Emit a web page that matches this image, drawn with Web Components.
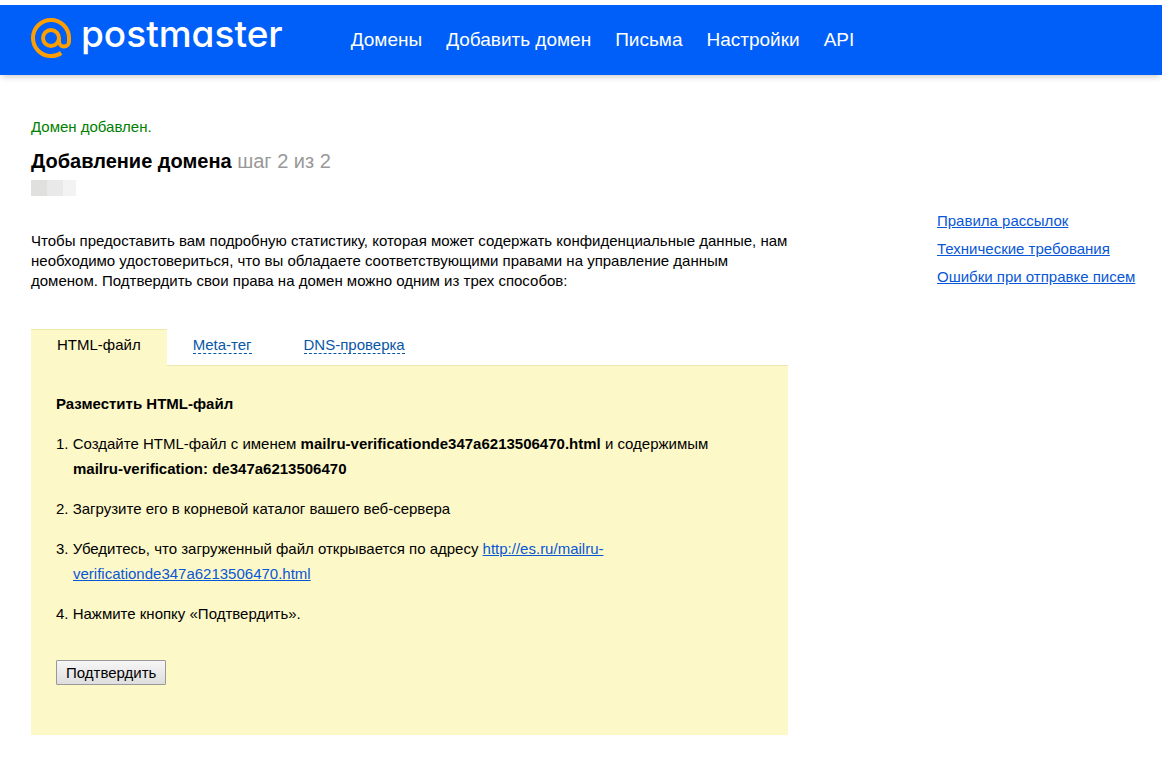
<!DOCTYPE html>
<html lang="ru">
<head>
<meta charset="utf-8">
<meta name="viewport" content="width=device-width, initial-scale=1">
<title>Postmaster — Добавление домена</title>
<style>
  body { margin: 0; background: #fff; color: #000; font: 15px/20px "Liberation Sans", Arial, sans-serif; }
</style>
</head>
<body>
<pm-page>
  <pm-header slot="header"></pm-header>
  <pm-intro>
    <span slot="status">Домен добавлен.</span>
    <span slot="title">Добавление домена</span>
    <span slot="step">шаг 2 из 2</span>
    Чтобы предоставить вам подробную статистику, которая может содержать конфиденциальные данные, нам необходимо удостовериться, что вы обладаете соответствующими правами на управление данным доменом. Подтвердить свои права на домен можно одним из трех способов:
  </pm-intro>
  <pm-verify></pm-verify>
  <pm-help slot="aside"></pm-help>
</pm-page>

<template id="pm-page">
  <style>
    :host { display: block; padding-top: 5px; }
    .body { display: grid; grid-template-columns: minmax(0, 1fr) 225px; column-gap: 149px; padding: 42px 0 29px 31px; }
  </style>
  <slot name="header"></slot>
  <div class="body">
    <main><slot></slot></main>
    <aside><slot name="aside"></slot></aside>
  </div>
</template>

<template id="pm-logo">
  <style>
    :host { display: block; }
    a { display: flex; align-items: center; gap: 10px; color: #fff; text-decoration: none; }
    svg { display: block; width: 40px; height: 40px; }
    span { font: 500 37px/32px Inter, sans-serif; font-feature-settings: "cv11"; padding-bottom: 8px; }
  </style>
  <a href="#" aria-label="postmaster">
    <svg viewBox="0 0 40 40" fill="none" stroke="#ff9e00" stroke-width="4" aria-hidden="true">
      <circle cx="20" cy="20" r="8"/>
      <path d="M28 20v3.500a5 5 0 0 0 10 0V20A18 18 0 1 0 20 38c3.800 0 7.300-1 10.200-3"/>
    </svg>
    <span>postmaster</span>
  </a>
</template>

<template id="pm-header">
  <style>
    :host { display: flex; align-items: center; gap: 68px; box-sizing: border-box; min-height: 70px; padding: 0 31px; background: #005ff9; box-shadow: 0 4px 6px -2px rgba(0, 0, 0, .2); }
    pm-logo { padding-bottom: 4px; }
    nav { display: flex; flex-wrap: wrap; gap: 24px; }
    nav a { color: #fff; font-size: 19px; line-height: 24px; text-decoration: none; }
  </style>
  <pm-logo></pm-logo>
  <nav>
    <a href="#">Домены</a>
    <a href="#">Добавить домен</a>
    <a href="#">Письма</a>
    <a href="#">Настройки</a>
    <a href="#">API</a>
  </nav>
</template>

<template id="pm-intro">
  <style>
    :host { display: block; }
    p { margin: 0; }
    .status { color: #008000; }
    h1 { margin: 12px 0 7px; font-size: 20px; line-height: 24px; }
    .step { color: #999; font-weight: normal; }
    .domain { display: flex; height: 16px; margin-bottom: 35px; }
    .domain i { width: 16px; background: #e0e0de; }
    .domain i:nth-child(2) { background: #e9e9e9; }
    .domain i:nth-child(3) { width: 13px; background: #f3f3f3; }
  </style>
  <p class="status"><slot name="status"></slot></p>
  <h1><slot name="title"></slot> <span class="step"><slot name="step"></slot></span></h1>
  <div class="domain" aria-hidden="true"><i></i><i></i><i></i></div>
  <p><slot></slot></p>
</template>

<template id="pm-tab">
  <style>
    :host { display: block; box-sizing: border-box; height: 36px; padding: 6px 26px 0; border-top: 1px solid transparent; }
    button { display: block; margin: 0; padding: 0; border: 0; border-bottom: 1px dashed #0857a6; background: none; color: #0857a6; font: inherit; line-height: 17px; cursor: pointer; }
    :host([active]) { height: 37px; background: #fdf8c8; border-top-color: #f0e8a8; }
    :host([active]) button { color: #000; border-bottom-color: transparent; }
  </style>
  <button type="button"><slot></slot></button>
</template>

<template id="pm-verify">
  <style>
    :host { display: block; margin-top: 38px; }
    .tabs { display: flex; height: 36px; }
    .panel { padding: 25px 25px 50px; border-top: 1px solid #eee8b0; background: #fdf8c8; line-height: 25px; }
    h2 { margin: 0; font-size: 15px; line-height: 25px; }
    ol { margin: 15px 0 34px; padding: 0 25px 0 0; list-style: none; counter-reset: step; }
    li { counter-increment: step; padding-left: 17px; text-indent: -17px; }
    li + li { margin-top: 15px; }
    li::before { content: counter(step) ". "; white-space: pre; }
    a { color: #0857d6; }
    button { display: block; box-sizing: border-box; height: 25px; margin: 0; padding: 1px 9px 0; border: 1px solid #999; border-radius: 1px; background: linear-gradient(#f6f6f6, #dedede); color: #000; font: inherit; line-height: 22px; }
  </style>
  <div class="tabs">
    <pm-tab active>HTML-файл</pm-tab>
    <pm-tab>Meta-тег</pm-tab>
    <pm-tab>DNS-проверка</pm-tab>
  </div>
  <section class="panel">
    <h2>Разместить HTML-файл</h2>
    <ol>
      <li>Создайте HTML-файл с именем <b>mailru-verificationde347a6213506470.html</b> и содержимым <b>mailru-verification: de347a6213506470</b></li>
      <li>Загрузите его в корневой каталог вашего веб-сервера</li>
      <li>Убедитесь, что загруженный файл открывается по адресу <a href="#">http://es.ru/mailru-verificationde347a6213506470.html</a></li>
      <li>Нажмите кнопку «Подтвердить».</li>
    </ol>
    <button type="button">Подтвердить</button>
  </section>
</template>

<template id="pm-help">
  <style>
    :host { display: grid; gap: 8px; padding-top: 94px; }
    a { justify-self: start; color: #0857d6; }
  </style>
  <a href="#">Правила рассылок</a>
  <a href="#">Технические требования</a>
  <a href="#">Ошибки при отправке писем</a>
</template>

<script>
  class PmElement extends HTMLElement {
    constructor() {
      super();
      const template = document.getElementById(this.localName);
      this.attachShadow({ mode: "open" }).append(template.content.cloneNode(true));
    }
  }
  for (const name of ["pm-page", "pm-logo", "pm-header", "pm-intro", "pm-tab", "pm-verify", "pm-help"]) {
    customElements.define(name, class extends PmElement {});
  }
</script>
</body>
</html>
